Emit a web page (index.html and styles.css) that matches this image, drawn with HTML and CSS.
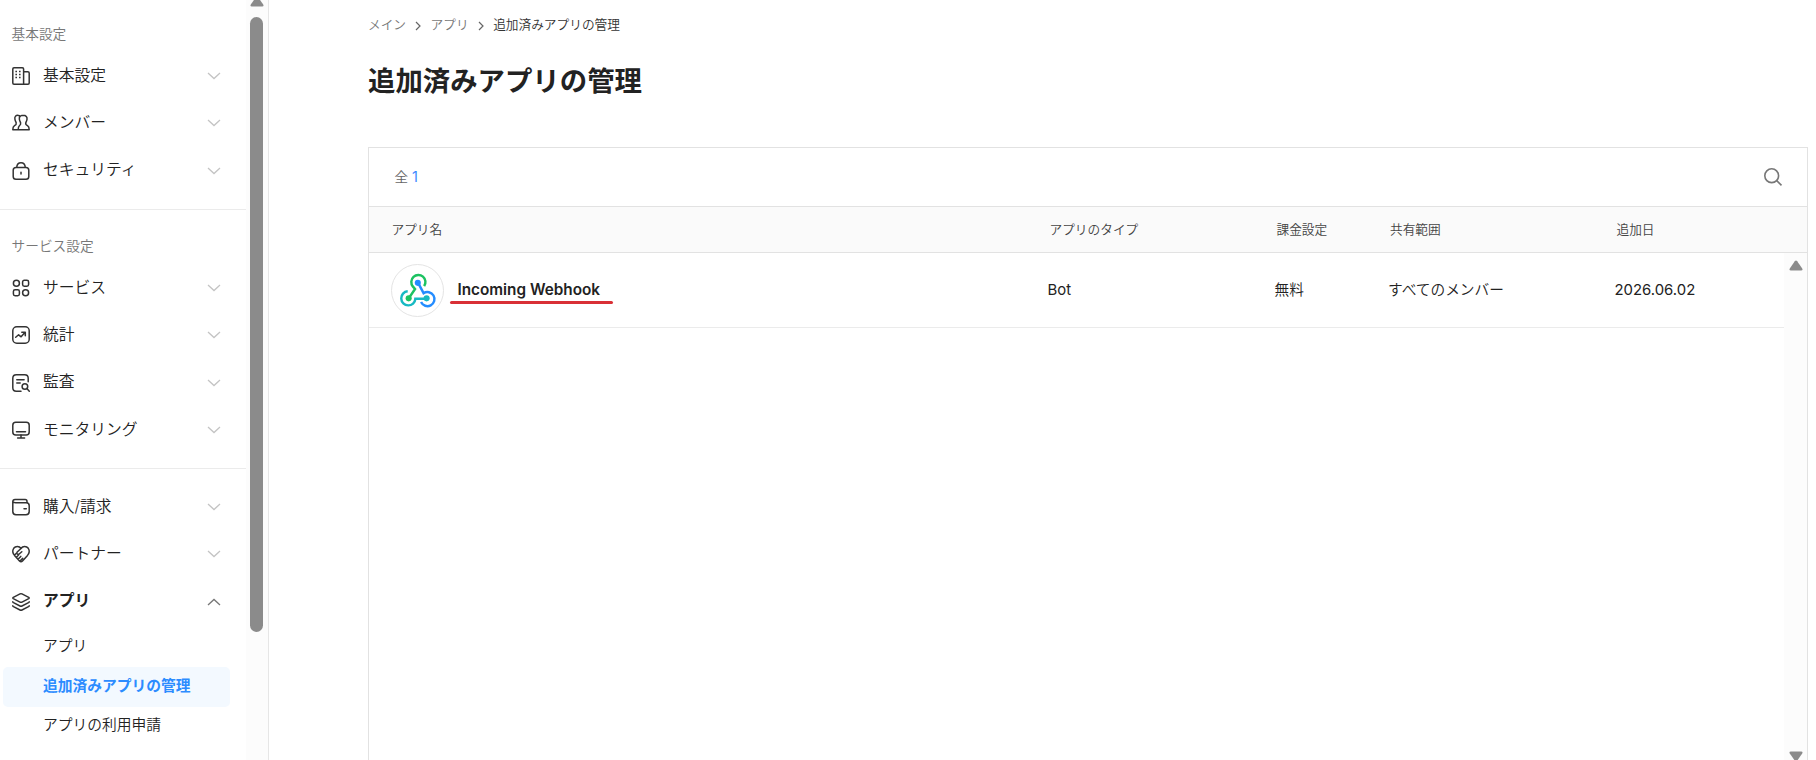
FILE: index.html
```html
<!DOCTYPE html>
<html lang="ja">
<head>
<meta charset="utf-8">
<title>追加済みアプリの管理</title>
<link rel="stylesheet" href="styles.css">
</head>
<body>
<svg width="0" height="0" class="defs">
  <symbol id="chevron" viewBox="0 0 14 8"><path d="M1 1l6 5.6L13 1"/></symbol>
  <symbol id="up" viewBox="0 0 14 8"><path d="M1 7l6-5.6L13 7"/></symbol>
</svg>
<div class="app">
  <aside class="sidebar">
    <nav class="nav">
      <section class="group first">
        <h2 class="group-title">基本設定</h2>
        <a class="item"><svg class="icon" viewBox="0 0 18 18"><path d="M2 .8h8.4q1.2 0 1.2 1.2v15.2H2q-1.2 0-1.2-1.2V2Q.8.800 2 .8zM11.600 4.700h4.200q1.400 0 1.400 1.400V16q0 1.200-1.200 1.200h-4.400"/><path class="dots" d="M3.400 4.500h1.600M7 4.500h1.600M3.400 7.500h1.600M7 7.500h1.600M3.400 10.500h1.600M7 10.500h1.600"/></svg><span>基本設定</span><svg class="chev"><use href="#chevron"/></svg></a>
        <a class="item"><svg class="icon" viewBox="0 0 18 18"><path d="M7.300 1.700C4 .4 2.400 2.600 2.900 5.200c.3 1.800.9 2.500 1.300 3.500.4 1.500-.5 2.300-1.700 3C1.200 12.500.8 13.600.8 15.800h5.400M11 1.300C8 1.300 7 3.200 7.400 5.400c.3 1.700.8 2.300 1.200 3.300.4 1.500-.4 2.300-1.200 3-.9.8-1.200 2-1.200 4.100h11c0-2.200-.4-3.300-1.700-4.100-1.300-.7-2.100-1.500-1.700-3 .4-1 .9-1.600 1.200-3.300.4-2.200-.9-4.100-4-4.100z"/></svg><span>メンバー</span><svg class="chev"><use href="#chevron"/></svg></a>
        <a class="item"><svg class="icon" viewBox="0 0 18 18"><path d="M4 5.400h10q2.800 0 2.800 2.800v6.200q0 2.800-2.800 2.800H4q-2.800 0-2.800-2.800V8.200q0-2.800 2.800-2.800zM4.700 5.200C5.200-.9 12.800-.9 13.300 5.200M9 10.300v1.700"/></svg><span>セキュリティ</span><svg class="chev"><use href="#chevron"/></svg></a>
      </section>
      <section class="group second">
        <h2 class="group-title">サービス設定</h2>
        <a class="item"><svg class="icon" viewBox="0 0 18 18"><circle cx="4.400" cy="4.200" r="3"/><rect x="10.600" y="1.200" width="6" height="6" rx="1.700"/><rect x="1.400" y="10.700" width="6" height="6" rx="1.700"/><circle cx="13.600" cy="13.700" r="3"/></svg><span>サービス</span><svg class="chev"><use href="#chevron"/></svg></a>
        <a class="item"><svg class="icon" viewBox="0 0 18 18"><rect x=".8" y=".8" width="16.400" height="16.400" rx="4"/><path d="M3.700 11.300l2.900-2.500 2.500 2 4-4.500M9.800 6.300h3.500v3.500"/></svg><span>統計</span><svg class="chev"><use href="#chevron"/></svg></a>
        <a class="item"><svg class="icon" viewBox="0 0 18 18"><path d="M9 17.200H4.300Q.8 17.200.8 13.700V4.300Q.8.800 4.300.8h8.400q3.500 0 3.500 3.500v3.500M4.800 5.700h7.300M4.800 9h3.400M14.900 14.600l2.400 2.600"/><circle cx="12.900" cy="12.500" r="2.800"/></svg><span>監査</span><svg class="chev"><use href="#chevron"/></svg></a>
        <a class="item"><svg class="icon" viewBox="0 0 18 18"><rect x=".8" y="1.200" width="16.400" height="12.800" rx="3"/><path d="M4.500 10.800h9M9 14v2.700M5.600 16.900h7"/></svg><span>モニタリング</span><svg class="chev"><use href="#chevron"/></svg></a>
      </section>
      <section class="group third">
        <a class="item"><svg class="icon" viewBox="0 0 18 18"><path d="M15 4.500V3.400q0-1.800-1.800-1.800H3Q.8 1.600.8 3.800v9.700q0 3.200 3.200 3.200h10q3.200 0 3.200-3.200V7.700q0-3-3-3H3.500Q1.200 4.700.8 3.500M12 10.800h2.300"/></svg><span>購入/請求</span><svg class="chev"><use href="#chevron"/></svg></a>
        <a class="item"><svg class="icon" viewBox="0 0 18 18"><path d="M9 3.500C7.300.8 3.500.8 1.700 3.300.1 5.700.8 8.300 2.500 10.400L7.500 16q1.500 1.600 3 0l5-5.600c1.700-2.100 2.400-4.700.8-7.100C14.500.8 10.700.8 9 3.500zM9 3.500L5.200 7c-1.200 1.600.7 3 2 2l2.600-2.200M2.400 10.300l2-2M4.200 12.400l2.500-2.600M6 14.300l2.800-2.900M8 16.100l2.700-2.700"/></svg><span>パートナー</span><svg class="chev"><use href="#chevron"/></svg></a>
        <a class="item open"><svg class="icon" viewBox="0 0 18 18"><path d="M8 .9q1-.5 2 0l6.700 3.500q.9.6 0 1.200L10 9.100q-1 .5-2 0L1.300 5.600q-.9-.6 0-1.200zM.8 8.700q0 .6.700 1L8 13q1 .5 2 0l6.500-3.300q.7-.4.700-1M.8 12.700q0 .6.700 1L8 17q1 .5 2 0l6.500-3.300q.7-.4.700-1"/></svg><span>アプリ</span><svg class="chev"><use href="#up"/></svg></a>
        <div class="sub">
          <a class="sub-item">アプリ</a>
          <a class="sub-item active">追加済みアプリの管理</a>
          <a class="sub-item">アプリの利用申請</a>
        </div>
      </section>
    </nav>
    <div class="track">
      <svg class="arrow top" viewBox="0 0 14 11"><path d="M5.800 1.300q1.200-1.500 2.400 0l5 7.200q1 1.800-1 2H1.800q-2-.2-1-2z"/></svg>
      <div class="thumb"></div>
    </div>
  </aside>
  <main class="main">
    <div class="crumbs">
      <span>メイン</span><svg class="sep" viewBox="0 0 6 8"><path d="M1 0L5 4 1 8"/></svg><span>アプリ</span><svg class="sep" viewBox="0 0 6 8"><path d="M1 0L5 4 1 8"/></svg><span class="current">追加済みアプリの管理</span>
    </div>
    <h1 class="title">追加済みアプリの管理</h1>
    <div class="panel">
      <div class="toolbar">
        <div class="total">全 <b>1</b></div>
        <svg class="search" viewBox="0 0 18 18"><circle cx="7.700" cy="7.700" r="6.900"/><path d="M12.700 12.700l4.800 4.600"/></svg>
      </div>
      <div class="row head"><div>アプリ名</div><div>アプリのタイプ</div><div>課金設定</div><div>共有範囲</div><div>追加日</div></div>
      <div class="body">
        <div class="rows">
          <div class="row data">
            <div class="name">
              <span class="avatar"><svg viewBox="0 0 52 52">
                <path class="g" d="M32.800 21.500A7.200 7.200 0 1 0 21.200 21.800L23.500 24.500 17 34"/>
                <path class="t" d="M16 26.800A7.200 7.200 0 1 0 23.800 34.500H35"/>
                <path class="b" d="M26.500 18L32.200 28.700A7.200 7.200 0 1 1 29.600 37.800"/>
                <circle class="bf" cx="26.300" cy="18.200" r="3.100"/><circle class="gf" cx="17" cy="34" r="3.100"/><circle class="tf" cx="35.300" cy="34" r="3.100"/>
              </svg></span>
              <span class="app-name">Incoming Webhook</span>
            </div>
            <div class="latin">Bot</div><div>無料</div><div>すべてのメンバー</div><div class="latin">2026.06.02</div>
          </div>
        </div>
        <div class="track table-track">
          <svg class="arrow" viewBox="0 0 14 11"><path d="M5.800 1.300q1.200-1.500 2.400 0l5 7.200q1 1.800-1 2H1.800q-2-.2-1-2z"/></svg>
          <svg class="arrow" viewBox="0 0 14 11"><path d="M5.800 9.700q1.200 1.500 2.400 0l5-7.200q1-1.800-1-2H1.800q-2 .2-1 2z"/></svg>
        </div>
      </div>
    </div>
  </main>
</div>
</body>
</html>
```
FILE: styles.css
```css
* { box-sizing: border-box; }
body { margin: 0; height: 760px; overflow: hidden; background: #fff; color: #222; font-family: Inter, "Noto Sans CJK JP", sans-serif; font-weight: 350; line-height: 1.5; }
svg { display: block; fill: none; stroke: currentColor; flex: none; overflow: visible; }
.defs { position: absolute; }
.app { display: flex; height: 760px; overflow: hidden; }

.sidebar { display: flex; width: 269px; flex: none; border-right: 1px solid #e6e6e6; }
.nav { width: 246px; }
.group { border-bottom: 1px solid #ebebeb; }
.group.first { height: 210px; padding-top: 18px; }
.group.second { height: 259px; padding-top: 20px; }
.group.third { border: 0; padding-top: 14px; }
.group-title { display: flex; align-items: center; height: 34px; margin: 0; padding: 0 0 1px 11.500px; font-size: 13.7px; font-weight: inherit; color: #777; }
.item { display: flex; align-items: center; height: 47.3px; padding: 0 25px 0 12px; font-size: 15.75px; line-height: 24px; }
.item span { flex: 1; padding-left: 13px; }
.item.open { font-weight: 700; }
.icon { width: 18px; height: 18px; stroke: #333; stroke-width: 1.5; stroke-linecap: round; stroke-linejoin: round; margin-top: 1px; }
.dots { stroke-linecap: butt; }
.chev { width: 14px; height: 8px; margin-top: 1px; stroke: #c4c4c4; stroke-width: 1.3; }
.open .chev { stroke: #777; }
.sub { padding: 3px 0 0 3px; }
.sub-item { display: flex; align-items: center; width: 227px; height: 39.500px; padding: 0 0 3px 40px; border-radius: 5px; font-size: 14.75px; }
.sub-item.active { background: #f3f9ff; color: #2c8cff; font-weight: 700; }

.track { width: 22px; background: #fcfcfc; display: flex; flex-direction: column; align-items: center; }
.sidebar .track { padding-right: 1px; }
.arrow { width: 14px; height: 11px; flex: none; fill: #8b8b8b; stroke: none; }
.arrow.top { margin-top: -4px; }
.thumb { width: 13px; height: 615px; margin-top: 10px; border-radius: 7px; background: #8b8b8b; }

.main { flex: 1; display: flex; flex-direction: column; padding: 14px 8px 0 99px; }
.crumbs { display: flex; align-items: center; height: 22px; flex: none; font-size: 12.7px; color: #777; }
.crumbs .current { color: #333; }
.sep { width: 6px; height: 8px; margin: 1px 9.500px 0 9px; stroke: #666; stroke-width: 1.2; }
.title { margin: 24px 0 0; height: 42px; flex: none; line-height: 42px; font-size: 27.4px; font-weight: 700; }
.panel { margin-top: 45px; height: 640px; flex: none; display: flex; flex-direction: column; border: 1px solid #e2e2e2; }
.toolbar { display: flex; align-items: center; justify-content: space-between; height: 59px; flex: none; padding: 0 25px 0 25.500px; border-bottom: 1px solid #e2e2e2; }
.total { font-size: 13.6px; color: #666; }
.total b { font-size: 14.5px; font-weight: 400; color: #3b87ff; }
.search { width: 18px; height: 18px; stroke: #777; stroke-width: 1.6; }
.row { display: grid; grid-template-columns: 658px 227px 113.500px 226.500px 1fr; align-items: center; }
.head { height: 46px; flex: none; padding: 1px 0 0 22.500px; border-bottom: 1px solid #e2e2e2; background: #fafafa; font-size: 12.7px; color: #444; }
.body { flex: 1; display: flex; }
.rows { flex: 1; }
.data { height: 75px; padding-left: 20.500px; border-bottom: 1px solid #ebebeb; font-size: 14.7px; }
.name { display: flex; align-items: center; }
.avatar { width: 53px; height: 53px; margin: 1px 0 0 1px; border: 1px solid #e4e4e4; border-radius: 50%; flex: none; }
.avatar svg { stroke-width: 2.5; stroke-linecap: butt; width: 51px; height: 51px; }
.g { stroke: #1cc261; } .t { stroke: #17b9c2; } .b { stroke: #248cff; }
.gf { fill: #1cc261; stroke: none; } .tf { fill: #17b9c2; stroke: none; } .bf { fill: #248cff; stroke: none; }
.app-name { position: relative; margin: 1px 0 0 14px; font-size: 15.3px; font-weight: 600; }
.app-name::after { content: ""; position: absolute; left: -8px; width: 163px; height: 3px; top: 22px; border-radius: 2px; background: #d93036; }
.latin { font-size: 14.9px; font-weight: 400; }
.table-track { width: 23px; height: 509px; justify-content: space-between; padding: 7px 0 0; }
```
